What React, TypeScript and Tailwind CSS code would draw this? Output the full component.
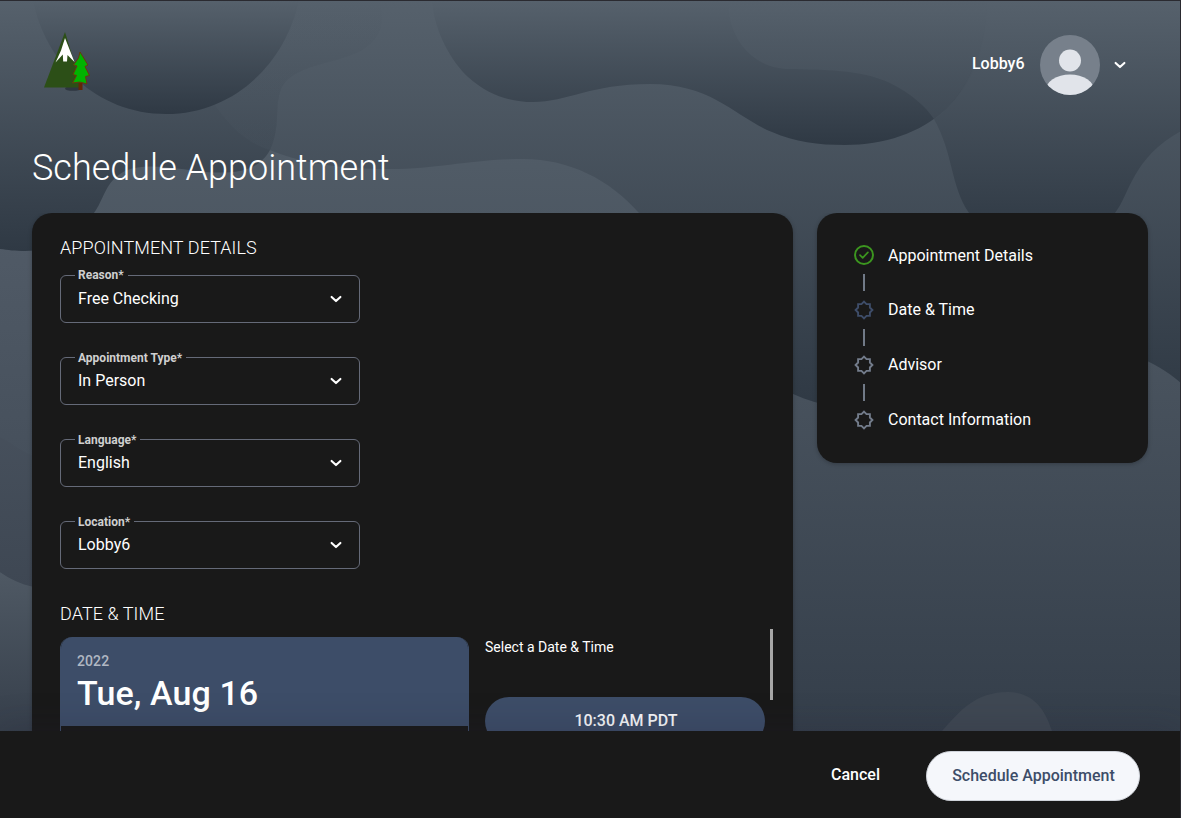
import React from "react";

const waves = [
  { id: "g0", y1: 130, y2: 760, from: "#525d68", to: "#303945" },
  { id: "gA", y1: 0, y2: 251, from: "#56616c", to: "#2f3944" },
  { id: "gB", y1: 0, y2: 408, from: "#56616c", to: "#2f3944" },
  { id: "gC", y1: 0, y2: 145, from: "#56616c", to: "#2f3944" },
  { id: "gD", y1: 0, y2: 230, from: "#56616c", to: "#2f3944" },
  { id: "gE", y1: 0, y2: 114, from: "#56616c", to: "#2f3944" },
  { id: "gL", y1: 240, y2: 590, from: "#505a66", to: "#3e4753" },
  { id: "gM", y1: 240, y2: 720, from: "#505a66", to: "#3a4450" },
  { id: "gN", y1: 570, y2: 735, from: "#4f5964", to: "#363f4b" },
  { id: "gR", y1: 360, y2: 740, from: "#49535e", to: "#343e4a" },
];

function Background() {
  return (
    <svg className="absolute inset-0" width="1181" height="818" viewBox="0 0 1181 818" aria-hidden="true">
      <defs>
        {waves.map((w) => (
          <linearGradient key={w.id} id={w.id} gradientUnits="userSpaceOnUse" x1="0" x2="0" y1={w.y1} y2={w.y2}>
            <stop offset="0" stopColor={w.from} />
            <stop offset="1" stopColor={w.to} />
          </linearGradient>
        ))}
      </defs>
      <rect width="1181" height="818" fill="url(#g0)" />
      <path d="M793 360H1110C1150 355 1165 370 1181 383V740H780V370Z" fill="url(#gR)" />
      <path d="M0 240H60V740H0Z" fill="url(#gN)" />
      <path d="M0 240H60V589C35 589 18 583 0 572Z" fill="url(#gM)" />
      <path d="M0 437C12 443 20 451 34 456V587C20 584 10 579 0 572Z" fill="url(#gL)" />
      <path d="M190 0C195 80 210 105 235 128C270 160 330 169 390 169C440 169 470 159 523 159C570 159 610 180 639 213C690 275 730 370 793 394C870 428 970 406 1030 370C1075 343 1130 340 1181 383V0Z" fill="url(#gB)" />
      <path d="M0 0H380C385 22 382 38 362 50C335 65 292 64 281 89C274 107 281 125 270 150C258 172 235 174 205 172C175 169 147 162 125 171C105 181 104 200 94 213C82 238 55 251 25 251C15 251 8 250 0 249Z" fill="url(#gA)" />
      <path d="M185 0C190 70 208 103 238 132C250 142 260 147 270 150C281 125 274 107 281 89C292 64 335 65 362 50C382 38 385 22 380 0Z" fill="url(#gB)" opacity=".3" />
      <path d="M33 0H299C286 62 235 114 166 114C96 114 45 62 33 0Z" fill="url(#gE)" />
      <path d="M432 0C434 32 452 62 468 77C488 95 510 102 533 102C568 102 590 84 650 84C713 84 735 117 772 132C795 142 818 145 845 145C925 145 988 97 987 0Z" fill="url(#gC)" />
      <path d="M728 0C728 38 752 69 790 69C822 70 860 69 890 83C912 94 926 107 934 119C956 106 987 60 987 0Z" fill="url(#gD)" opacity=".78" />
      <path d="M987 0C987 60 956 106 934 119C954 155 950 185 969 213C990 245 1085 245 1115 213C1130 194 1132 158 1181 131V0Z" fill="url(#gD)" opacity=".9" />
      <path d="M942 731C960 711 975 692 1008 692C1035 692 1046 712 1052 731Z" fill="#3f4853" />
    </svg>
  );
}

function Logo() {
  return (
    <svg width="50" height="60" viewBox="0 0 50 60" role="img" aria-label="Mountain and pine">
      <ellipse cx="29" cy="56.500" rx="8" ry="2.300" fill="#283039" opacity=".8" />
      <path d="M21 0 38 55.500H0Z" fill="#2c4f17" />
      <path d="M21 6 30.500 30 23.500 23 23 29.500H19.200L18.800 22.500 11.500 30.500 17 18.500Z" fill="#fff" />
      <path d="M34.500 51h4v7h-4z" fill="#632706" />
      <path d="M36 20 38.500 24 44 33 41 34.500 45.500 43.500 41.500 44.500 43 52Q36 48.500 28.500 51L32.500 43.500 29 42.500 33 34 29.500 33 34.500 26Z" fill="#00b300" stroke="#653b0b" strokeWidth="1" />
    </svg>
  );
}

function Chevron() {
  return (
    <svg width="12" height="8" viewBox="0 0 12 8" fill="none" stroke="#fff" strokeWidth="2.100" strokeLinecap="round" strokeLinejoin="round" aria-hidden="true">
      <path d="m1.600 1.900 4.400 4.200 4.400-4.200" />
    </svg>
  );
}

function Avatar() {
  return (
    <svg width="60" height="60" viewBox="0 0 60 60" aria-hidden="true">
      <clipPath id="face">
        <circle cx="30" cy="30" r="30" />
      </clipPath>
      <g clipPath="url(#face)">
        <rect width="60" height="60" fill="#77808b" />
        <circle cx="30" cy="25.500" r="11" fill="#e1e4ea" />
        <ellipse cx="30" cy="56" rx="24.500" ry="16.500" fill="#e1e4ea" />
      </g>
    </svg>
  );
}

function StepIcon({ state }: { state: string }) {
  if (state === "done") {
    return (
      <svg width="20" height="20" viewBox="0 0 20 20" fill="none" stroke="#3c961f" strokeWidth="2" strokeLinecap="round" strokeLinejoin="round" aria-hidden="true">
        <circle cx="10" cy="10" r="9" />
        <path d="m6 10.200 2.700 2.600 5.200-5.500" strokeWidth="1.700" />
      </svg>
    );
  }
  return (
    <svg width="20" height="20" viewBox="0 0 20 20" fill="none" stroke={state === "current" ? "#3e4d69" : "#737c8b"} strokeWidth="1.900" aria-hidden="true">
      <path d="M10 1.600 12.500 4.100H15.900V7.500L18.400 10 15.900 12.500V15.900H12.500L10 18.400 7.500 15.900H4.100V12.500L1.600 10 4.100 7.500V4.100H7.500Z" />
    </svg>
  );
}

const fields = [
  { label: "Reason*", value: "Free Checking", labelTop: "-top-[9px]" },
  { label: "Appointment Type*", value: "In Person", labelTop: "-top-[8px]" },
  { label: "Language*", value: "English", labelTop: "-top-[8px]" },
  { label: "Location*", value: "Lobby6", labelTop: "-top-[8px]" },
];

const steps = [
  { label: "Appointment Details", state: "done", offset: "pt-[2px]" },
  { label: "Date & Time", state: "current", offset: "" },
  { label: "Advisor", state: "todo", offset: "" },
  { label: "Contact Information", state: "todo", offset: "" },
];

function Select({ label, value, labelTop }: { label: string; value: string; labelTop: string }) {
  return (
    <div className="relative flex h-12 w-[300px] items-center justify-between rounded-[6px] border border-[#656a78] pr-[17px] pl-[17px]">
      <span className={`absolute left-[14px] bg-[#191919] pr-[4px] pl-[3px] text-[12px] leading-[16px] font-bold text-[#cfcfcf] ${labelTop}`}>{label}</span>
      <span className="text-[16px] leading-5 text-white">{value}</span>
      <Chevron />
    </div>
  );
}

export default function App() {
  return (
    <div className="relative flex h-[818px] w-[1181px] flex-col overflow-hidden bg-[#191919] font-['Roboto',sans-serif]">
      <Background />
      <header className="relative flex h-[131px] shrink-0 items-start justify-between border-t border-[#2a2a30] pr-[55px] pl-[43.500px]">
        <div className="pt-[31px]">
          <Logo />
        </div>
        <div className="flex items-center pt-[34px]">
          <span className="mr-[15.500px] pb-[3px] text-[16px] leading-5 font-medium text-white">Lobby6</span>
          <Avatar />
          <span className="ml-[14px]">
            <Chevron />
          </span>
        </div>
      </header>
      <h1 className="relative h-[82px] shrink-0 pt-[14px] pl-8 text-[36px] leading-[46px] font-light text-white">Schedule Appointment</h1>
      <main className="relative flex min-h-0 flex-1 items-start gap-6 overflow-hidden px-8">
        <section className="h-[560px] w-[761px] shrink-0 rounded-t-[20px] bg-[#191919] px-7 pt-[23px] shadow-[0_1px_4px_rgba(0,0,0,.25)]">
          <h2 className="h-[39px] text-[18px] leading-6 font-light tracking-[0.08px] text-white">APPOINTMENT DETAILS</h2>
          <div className="flex flex-col gap-[34px]">
            {fields.map((f) => (
              <Select key={f.label} label={f.label} value={f.value} labelTop={f.labelTop} />
            ))}
          </div>
          <h2 className="mt-[33px] text-[18px] leading-6 font-light tracking-[0.08px] text-white">DATE &amp; TIME</h2>
          <div className="flex w-[720px] items-start">
            <div className="mt-[11px] h-[300px] w-[409px] shrink-0 overflow-hidden rounded-t-[12px] border-x border-[#3d4d68]">
              <div className="h-[89px] bg-[#3d4d68] px-4 pt-[14px]">
                <div className="text-[14px] leading-5 font-medium tracking-[0.1px] text-[#b1b8c3]">2022</div>
                <div className="mt-[1px] text-[34px] leading-[42px] font-medium tracking-[0.1px] text-white">Tue, Aug 16</div>
              </div>
            </div>
            <div className="ml-4 w-[280px] shrink-0 pt-[11px]">
              <div className="h-[60px] text-[14px] leading-5 text-white">Select a Date &amp; Time</div>
              <div className="flex h-12 items-center justify-center rounded-full bg-[#3d4d68] pb-px pl-[2px] text-[16px] font-medium text-[#f7f8fa]">10:30 AM PDT</div>
            </div>
            <div className="mt-[3px] ml-[5px] h-[71px] w-[3px] shrink-0 bg-[#a6a6a6]" />
          </div>
        </section>
        <aside className="h-[250px] w-[331px] shrink-0 rounded-[20px] bg-[#191919] pt-8 pl-[37px] shadow-[0_1px_4px_rgba(0,0,0,.25)]">
          {steps.map((s, i) => (
            <div key={s.label}>
              <div className="flex h-5 items-center">
                <StepIcon state={s.state} />
                <span className={`ml-[14px] text-[16px] leading-5 text-white ${s.offset}`}>{s.label}</span>
              </div>
              {i < steps.length - 1 && (
                <div className="flex h-[35px] w-5 justify-center pt-[9px]">
                  <span className="h-[17px] w-[2px] bg-[#717a87]" />
                </div>
              )}
            </div>
          ))}
        </aside>
      </main>
      <footer className="relative flex h-[87px] shrink-0 items-center justify-end bg-[#191919] pr-[41px] shadow-[0_0_36px_rgba(35,32,50,.25)]">
        <span className="mr-[46px] text-[16px] font-medium text-white">Cancel</span>
        <span className="mt-[3px] flex h-[50px] w-[214px] items-center justify-center rounded-full border border-[#cfd3da] bg-[#f5f7fb] pl-px text-[16px] font-medium text-[#3d4d68]">Schedule Appointment</span>
      </footer>
      <div className="absolute top-0 right-0 h-full w-px bg-[#2a2a30]" />
    </div>
  );
}
